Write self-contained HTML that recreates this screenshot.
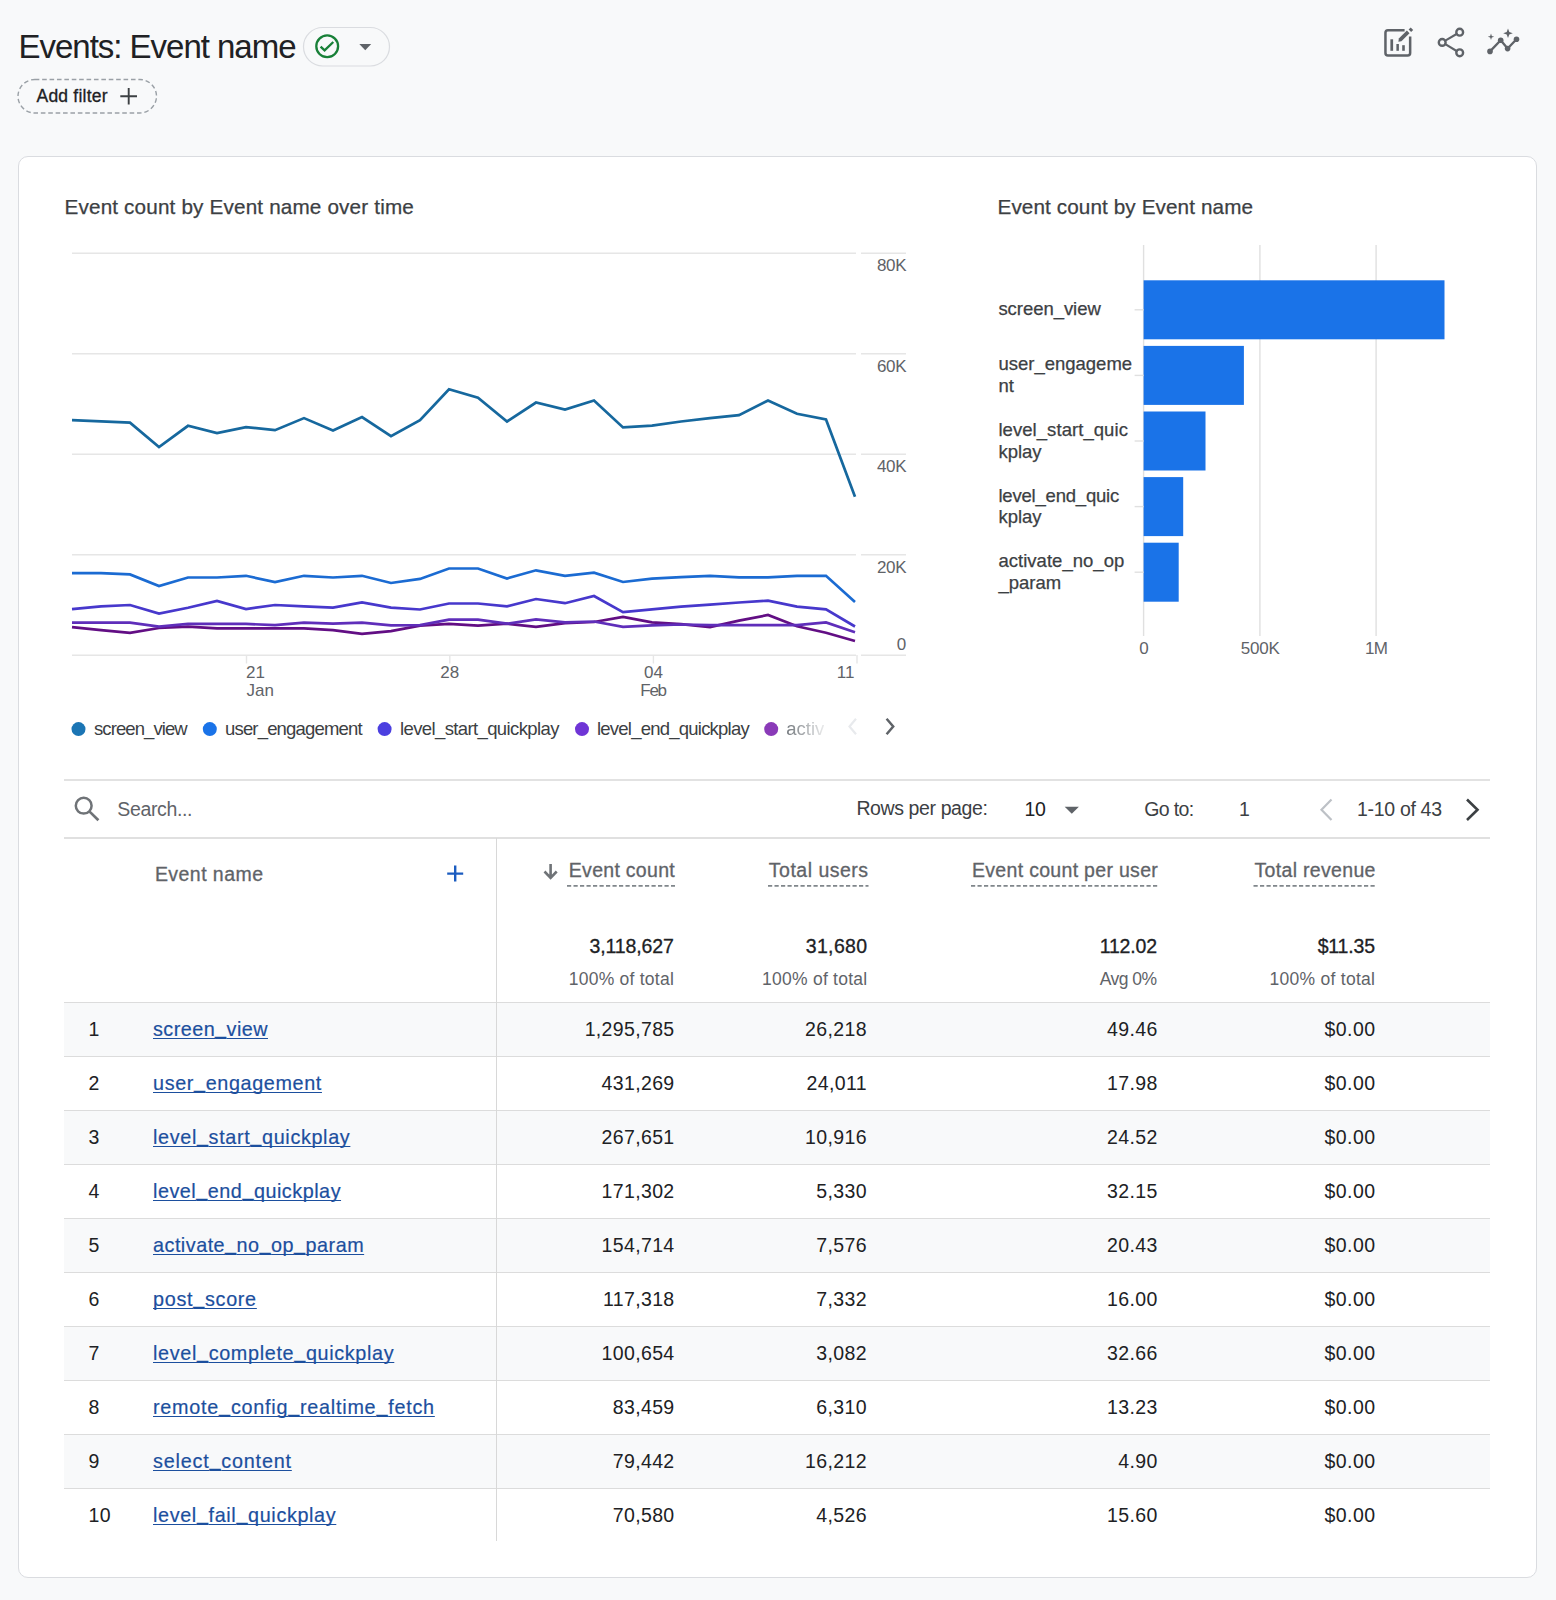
<!DOCTYPE html>
<html><head><meta charset="utf-8"><title>Events: Event name</title><style>
html,body{margin:0;padding:0;}
body{width:1556px;height:1600px;background:#f8f9fa;position:relative;overflow:hidden;font-family:"Liberation Sans", sans-serif;}
.t{position:absolute;white-space:nowrap;}
.st{-webkit-text-stroke:0.25px currentColor;}
.lk{text-decoration:underline;text-decoration-thickness:1.3px;text-underline-offset:2.2px;text-decoration-skip-ink:none;-webkit-text-stroke:0.2px currentColor;}
.us{position:relative;top:-1.6px;}
.act{-webkit-mask-image:linear-gradient(to right,#000 0%,rgba(0,0,0,.15) 100%);mask-image:linear-gradient(to right,#000 0%,rgba(0,0,0,.15) 100%);}
.abs{position:absolute;}
.card{position:absolute;left:18px;top:156px;width:1517px;height:1420px;background:#fff;border:1px solid #dadce0;border-radius:10px;box-sizing:content-box;}
.hl{position:absolute;left:64px;width:1426px;height:1px;background:#dcdcdc;}
.rowbg{position:absolute;left:64px;width:1426px;background:#f8f9fa;}
</style></head>
<body>
<div class="card"></div>
<div class="hl" style="top:779px;background:#e2e2e2;height:2px"></div><div class="hl" style="top:837px;height:2px;background:#e0e0e0"></div><div class="hl" style="top:1002.2px;"></div><div class="rowbg" style="top:1003.2px;height:53.5px"></div><div class="hl" style="top:1056.2px;"></div><div class="rowbg" style="top:1111.2px;height:53.5px"></div><div class="hl" style="top:1110.2px;"></div><div class="hl" style="top:1164.2px;"></div><div class="rowbg" style="top:1219.2px;height:53.5px"></div><div class="hl" style="top:1218.2px;"></div><div class="hl" style="top:1272.2px;"></div><div class="rowbg" style="top:1327.2px;height:53.5px"></div><div class="hl" style="top:1326.2px;"></div><div class="hl" style="top:1380.2px;"></div><div class="rowbg" style="top:1435.2px;height:53.5px"></div><div class="hl" style="top:1434.2px;"></div><div class="hl" style="top:1488.2px;"></div><div style="position:absolute;left:496px;top:838px;width:1px;height:703px;background:#d8d8d8"></div>
<svg class="abs" style="left:0;top:0" width="1556" height="1600" viewBox="0 0 1556 1600">
<line x1="72" y1="253.2" x2="856" y2="253.2" stroke="#e6e6e6" stroke-width="1.6"/><line x1="861" y1="253.2" x2="906" y2="253.2" stroke="#e6e6e6" stroke-width="1.6"/><line x1="72" y1="353.7" x2="856" y2="353.7" stroke="#e6e6e6" stroke-width="1.6"/><line x1="861" y1="353.7" x2="906" y2="353.7" stroke="#e6e6e6" stroke-width="1.6"/><line x1="72" y1="454.2" x2="856" y2="454.2" stroke="#e6e6e6" stroke-width="1.6"/><line x1="861" y1="454.2" x2="906" y2="454.2" stroke="#e6e6e6" stroke-width="1.6"/><line x1="72" y1="554.7" x2="856" y2="554.7" stroke="#e6e6e6" stroke-width="1.6"/><line x1="861" y1="554.7" x2="906" y2="554.7" stroke="#e6e6e6" stroke-width="1.6"/><line x1="72" y1="655.2" x2="856" y2="655.2" stroke="#e6e6e6" stroke-width="1.6"/><line x1="861" y1="655.2" x2="906" y2="655.2" stroke="#e6e6e6" stroke-width="1.6"/><line x1="246.5" y1="655" x2="246.5" y2="663.5" stroke="#e6e6e6" stroke-width="1.4"/><line x1="449.8" y1="655" x2="449.8" y2="663.5" stroke="#e6e6e6" stroke-width="1.4"/><line x1="653.4" y1="655" x2="653.4" y2="663.5" stroke="#e6e6e6" stroke-width="1.4"/><line x1="857" y1="655" x2="857" y2="663.5" stroke="#e6e6e6" stroke-width="1.4"/><polyline points="72.0,627.1 101.0,630.2 130.0,632.9 159.0,628.0 188.0,626.6 217.0,628.4 246.0,628.4 275.0,628.4 304.0,628.4 333.0,630.2 362.0,633.8 391.0,631.2 420.0,625.6 449.0,623.8 478.0,625.6 507.0,623.7 536.0,626.8 565.0,623.2 594.0,622.0 623.0,616.8 652.0,622.3 681.0,624.1 710.0,627.1 739.0,620.6 768.0,615.0 797.0,626.2 826.0,632.7 855.0,641.0" fill="none" stroke="#620e84" stroke-width="2.7" stroke-linejoin="miter" stroke-miterlimit="3"/><polyline points="72.0,622.6 101.0,622.6 130.0,622.6 159.0,626.6 188.0,623.9 217.0,623.9 246.0,623.9 275.0,625.1 304.0,622.6 333.0,623.6 362.0,622.6 391.0,625.3 420.0,625.1 449.0,619.6 478.0,619.6 507.0,623.7 536.0,619.3 565.0,622.4 594.0,621.5 623.0,626.9 652.0,625.3 681.0,624.5 710.0,625.2 739.0,625.2 768.0,625.2 797.0,625.2 826.0,622.4 855.0,632.3" fill="none" stroke="#5f2eba" stroke-width="2.7" stroke-linejoin="miter" stroke-miterlimit="3"/><polyline points="72.0,609.1 101.0,606.4 130.0,605.0 159.0,613.6 188.0,607.7 217.0,600.9 246.0,609.1 275.0,605.0 304.0,606.4 333.0,607.7 362.0,602.3 391.0,607.7 420.0,609.5 449.0,603.5 478.0,603.5 507.0,606.4 536.0,599.0 565.0,603.2 594.0,596.0 623.0,612.2 652.0,609.4 681.0,606.6 710.0,604.7 739.0,602.5 768.0,600.6 797.0,606.6 826.0,609.4 855.0,626.5" fill="none" stroke="#4738cc" stroke-width="2.7" stroke-linejoin="miter" stroke-miterlimit="3"/><polyline points="72.0,573.1 101.0,573.1 130.0,574.4 159.0,586.1 188.0,577.5 217.0,577.5 246.0,575.8 275.0,582.0 304.0,575.8 333.0,577.5 362.0,575.8 391.0,583.0 420.0,578.9 449.0,568.5 478.0,568.5 507.0,578.5 536.0,570.3 565.0,575.8 594.0,572.7 623.0,582.0 652.0,578.6 681.0,577.1 710.0,575.8 739.0,577.3 768.0,577.3 797.0,575.8 826.0,575.8 855.0,601.9" fill="none" stroke="#1b6bd2" stroke-width="2.7" stroke-linejoin="miter" stroke-miterlimit="3"/><polyline points="72.0,420.1 101.0,421.4 130.0,422.7 159.0,447.1 188.0,425.8 217.0,433.0 246.0,427.1 275.0,430.2 304.0,418.1 333.0,430.4 362.0,417.0 391.0,436.1 420.0,420.1 449.0,389.3 478.0,397.7 507.0,421.5 536.0,402.5 565.0,409.6 594.0,400.5 623.0,427.4 652.0,425.7 681.0,421.5 710.0,418.1 739.0,415.2 768.0,400.5 797.0,413.8 826.0,419.5 855.0,496.7" fill="none" stroke="#16689e" stroke-width="2.7" stroke-linejoin="miter" stroke-miterlimit="3"/><circle cx="78.5" cy="729.1" r="7" fill="#1b75b4"/><circle cx="209.8" cy="729.1" r="7" fill="#1a73e8"/><circle cx="384.6" cy="729.1" r="7" fill="#4b3fe0"/><circle cx="582" cy="729.1" r="7" fill="#6f35d6"/><circle cx="771.2" cy="729.1" r="7" fill="#8a3ab8"/><polyline points="856,718.8 849.5,726.5 856,734.2" fill="none" stroke="#e8eaed" stroke-width="2.2"/><polyline points="886.6,718.8 893.2,726.5 886.6,734.2" fill="none" stroke="#5f6368" stroke-width="2.5"/>
<line x1="1143.6" y1="245" x2="1143.6" y2="636" stroke="#e0e0e0" stroke-width="1.4"/><line x1="1259.9" y1="245" x2="1259.9" y2="636" stroke="#e0e0e0" stroke-width="1.4"/><line x1="1376.1" y1="245" x2="1376.1" y2="636" stroke="#e0e0e0" stroke-width="1.4"/><rect x="1143.6" y="280.3" width="300.9" height="59" fill="#1a73e8"/><line x1="1134.6" y1="309.8" x2="1143.6" y2="309.8" stroke="#e0e0e0" stroke-width="1.4"/><rect x="1143.6" y="345.9" width="100.3" height="59" fill="#1a73e8"/><line x1="1134.6" y1="375.4" x2="1143.6" y2="375.4" stroke="#e0e0e0" stroke-width="1.4"/><rect x="1143.6" y="411.5" width="61.9" height="59" fill="#1a73e8"/><line x1="1134.6" y1="441.0" x2="1143.6" y2="441.0" stroke="#e0e0e0" stroke-width="1.4"/><rect x="1143.6" y="477.1" width="39.6" height="59" fill="#1a73e8"/><line x1="1134.6" y1="506.6" x2="1143.6" y2="506.6" stroke="#e0e0e0" stroke-width="1.4"/><rect x="1143.6" y="542.7" width="35.1" height="59" fill="#1a73e8"/><line x1="1134.6" y1="572.2" x2="1143.6" y2="572.2" stroke="#e0e0e0" stroke-width="1.4"/>
</svg>

<svg class="abs" style="left:0;top:0" width="1556" height="200" viewBox="0 0 1556 200">
 <rect x="303.5" y="27.5" width="86" height="38.5" rx="19.25" fill="none" stroke="#dadce0" stroke-width="1.2"/>
 <circle cx="327.2" cy="46.3" r="10.9" fill="none" stroke="#188038" stroke-width="2.3"/>
 <polyline points="320.6,46.6 324.6,50.4 333.3,42" fill="none" stroke="#188038" stroke-width="2.3"/>
 <polygon points="359.3,44 371.2,44 365.25,50.2" fill="#5f6368"/>
 <rect x="18" y="79.5" width="138.5" height="33.5" rx="16.75" fill="none" stroke="#9aa0a6" stroke-width="1.4" stroke-dasharray="4.6 2.8"/>
 <path d="M120.3 96.2H137M128.7 87.9V104.6" stroke="#3c4043" stroke-width="1.9"/>
 <!-- customize icon -->
 <path d="M1404.6 30.15H1388a2.55 2.55 0 0 0-2.55 2.55V53a2.55 2.55 0 0 0 2.55 2.55H1407.6a2.55 2.55 0 0 0 2.55-2.55V36.4" fill="none" stroke="#5f6368" stroke-width="2.5"/>
 <g fill="#5f6368"><rect x="1390.4" y="39.3" width="2.7" height="11.5"/><rect x="1396.4" y="44" width="2.5" height="6.8"/><rect x="1402.2" y="45.2" width="2.6" height="5.6"/>
 <polygon points="1398.4,41.7 1398.8,38.6 1406.9,30.5 1409.5,33.2 1401.4,41.3"/>
 <polygon points="1413.2,29.9 1410.7,27.4 1408.6,29.6 1411.1,32.1"/></g>
 <!-- share -->
 <g fill="none" stroke="#5f6368" stroke-width="2.4">
  <circle cx="1459.7" cy="32.2" r="3.4"/><circle cx="1442.2" cy="42.4" r="3.4"/><circle cx="1459.7" cy="52.8" r="3.4"/>
  <path d="M1445.3 40.6L1456.6 34M1445.3 44.2L1456.6 51" stroke-width="2.1"/>
 </g>
 <!-- insights -->
 <polyline points="1490,51.4 1500.7,40.3 1507.6,48.6 1516.5,39.3" fill="none" stroke="#5f6368" stroke-width="2.3"/>
 <g fill="#5f6368"><circle cx="1490" cy="51.4" r="2.8"/><circle cx="1500.7" cy="40.3" r="2.8"/><circle cx="1507.6" cy="48.6" r="2.8"/><circle cx="1516.5" cy="39.3" r="2.8"/>
 <path d="M1508 28.5L1509.3 32L1512.8 33.3L1509.3 34.6L1508 38.1L1506.7 34.6L1503.2 33.3L1506.7 32Z"/>
 <path d="M1491 33.6L1491.8 36L1494.2 36.8L1491.8 37.6L1491 40L1490.2 37.6L1487.8 36.8L1490.2 36Z"/></g>
</svg>
<svg class="abs" style="left:0;top:0" width="1556" height="1600" viewBox="0 0 1556 1600">
 <circle cx="83.7" cy="805.7" r="7.9" fill="none" stroke="#6f7377" stroke-width="2.5"/>
 <path d="M89.6 811.6L98.4 820.3" stroke="#6f7377" stroke-width="2.7"/>
 <polygon points="1064.7,806.8 1078.9,806.8 1071.8,813.8" fill="#5f6368"/>
 <polyline points="1331.5,799.5 1321.5,809.8 1331.5,820" fill="none" stroke="#bdc1c6" stroke-width="2.2"/>
 <polyline points="1467,799.5 1477.5,809.8 1467,820" fill="none" stroke="#3c4043" stroke-width="2.6"/>
 <path d="M455.2 865.6V881.6M447.2 873.6H463.2" stroke="#1b5cc0" stroke-width="2.4"/>
 <path d="M550.6 864V877.5M544.5 871.5L550.6 877.8L556.7 871.5" fill="none" stroke="#6f7377" stroke-width="2.6"/>
 <line x1="567" y1="885.8" x2="675" y2="885.8" stroke="#80868b" stroke-width="1.7" stroke-dasharray="4.2 2.3"/>
<line x1="768" y1="885.8" x2="868.5" y2="885.8" stroke="#80868b" stroke-width="1.7" stroke-dasharray="4.2 2.3"/>
<line x1="971" y1="885.8" x2="1158" y2="885.8" stroke="#80868b" stroke-width="1.7" stroke-dasharray="4.2 2.3"/>
<line x1="1253.5" y1="885.8" x2="1376" y2="885.8" stroke="#80868b" stroke-width="1.7" stroke-dasharray="4.2 2.3"/>
</svg>
<div class="t" style="top:29.86px;font-size:33px;line-height:33px;color:#202124;letter-spacing:-1.019px;left:18.50px;-webkit-text-stroke:0.05px currentColor;">Events: Event name</div><div class="t" style="top:87.58px;font-size:17.5px;line-height:17.5px;color:#202124;-webkit-text-stroke:0.3px currentColor;letter-spacing:0.216px;left:36.50px;">Add filter</div><div class="t st" style="top:196.77px;font-size:20.7px;line-height:20.7px;color:#3c4043;letter-spacing:0.161px;left:64.50px;">Event count by Event name over time</div><div class="t st" style="top:196.67px;font-size:20.7px;line-height:20.7px;color:#3c4043;letter-spacing:0.104px;left:997.50px;">Event count by Event name</div><div class="t" style="top:256.81px;font-size:17px;line-height:17px;color:#5f6368;letter-spacing:-0.324px;left:876.90px;">80K</div><div class="t" style="top:357.51px;font-size:17px;line-height:17px;color:#5f6368;letter-spacing:-0.324px;left:876.90px;">60K</div><div class="t" style="top:458.11px;font-size:17px;line-height:17px;color:#5f6368;letter-spacing:-0.324px;left:876.90px;">40K</div><div class="t" style="top:558.81px;font-size:17px;line-height:17px;color:#5f6368;letter-spacing:-0.324px;left:876.90px;">20K</div><div class="t" style="top:636.01px;font-size:17px;line-height:17px;color:#5f6368;left:896.85px;">0</div><div class="t" style="top:664.41px;font-size:17px;line-height:17px;color:#5f6368;left:246.00px;">21</div><div class="t" style="top:682.11px;font-size:17px;line-height:17px;color:#5f6368;letter-spacing:0.045px;left:246.50px;">Jan</div><div class="t" style="top:664.41px;font-size:17px;line-height:17px;color:#5f6368;left:440.35px;">28</div><div class="t" style="top:664.41px;font-size:17px;line-height:17px;color:#5f6368;left:644.05px;">04</div><div class="t" style="top:682.11px;font-size:17px;line-height:17px;color:#5f6368;letter-spacing:-1.297px;left:640.35px;">Feb</div><div class="t" style="top:664.41px;font-size:17px;line-height:17px;color:#5f6368;left:836.85px;">11</div><div class="t" style="top:720.24px;font-size:18.5px;line-height:18.5px;color:#3c4043;letter-spacing:-0.912px;left:94.00px;">screen_view</div><div class="t" style="top:720.24px;font-size:18.5px;line-height:18.5px;color:#3c4043;letter-spacing:-0.824px;left:225.00px;">user_engagement</div><div class="t" style="top:720.24px;font-size:18.5px;line-height:18.5px;color:#3c4043;letter-spacing:-0.617px;left:400.00px;">level_start_quickplay</div><div class="t" style="top:720.24px;font-size:18.5px;line-height:18.5px;color:#3c4043;letter-spacing:-0.773px;left:597.00px;">level_end_quickplay</div><div class="t act" style="top:720.24px;font-size:18.5px;line-height:18.5px;color:#70757a;left:786.30px;">activ</div><div class="t st" style="top:300.24px;font-size:18.5px;line-height:18.5px;color:#3c4043;letter-spacing:-0.042px;left:998.40px;">screen_view</div><div class="t st" style="top:355.34px;font-size:18.5px;line-height:18.5px;color:#3c4043;left:998.40px;">user_engageme</div><div class="t st" style="top:376.74px;font-size:18.5px;line-height:18.5px;color:#3c4043;left:998.40px;">nt</div><div class="t st" style="top:421.24px;font-size:18.5px;line-height:18.5px;color:#3c4043;letter-spacing:0.064px;left:998.40px;">level_start_quic</div><div class="t st" style="top:442.54px;font-size:18.5px;line-height:18.5px;color:#3c4043;left:998.40px;">kplay</div><div class="t st" style="top:486.84px;font-size:18.5px;line-height:18.5px;color:#3c4043;letter-spacing:-0.195px;left:998.40px;">level_end_quic</div><div class="t st" style="top:508.14px;font-size:18.5px;line-height:18.5px;color:#3c4043;left:998.40px;">kplay</div><div class="t st" style="top:552.44px;font-size:18.5px;line-height:18.5px;color:#3c4043;letter-spacing:0.032px;left:998.40px;">activate_no_op</div><div class="t st" style="top:573.74px;font-size:18.5px;line-height:18.5px;color:#3c4043;left:998.40px;">_param</div><div class="t" style="top:640.21px;font-size:17px;line-height:17px;color:#5f6368;left:1139.17px;">0</div><div class="t" style="top:640.21px;font-size:17px;line-height:17px;color:#5f6368;letter-spacing:-0.268px;left:1240.85px;">500K</div><div class="t" style="top:640.21px;font-size:17px;line-height:17px;color:#5f6368;letter-spacing:-0.816px;left:1365.00px;">1M</div><div class="t" style="top:799.79px;font-size:19.5px;line-height:19.5px;color:#5f6368;letter-spacing:-0.355px;left:117.30px;">Search...</div><div class="t" style="top:799.49px;font-size:19.5px;line-height:19.5px;color:#3c4043;letter-spacing:-0.390px;left:856.40px;">Rows per page:</div><div class="t" style="top:799.69px;font-size:19.5px;line-height:19.5px;color:#202124;letter-spacing:-0.490px;left:1024.60px;">10</div><div class="t" style="top:799.69px;font-size:19.5px;line-height:19.5px;color:#3c4043;letter-spacing:-0.642px;left:1144.30px;">Go to:</div><div class="t" style="top:799.69px;font-size:19.5px;line-height:19.5px;color:#3c4043;left:1238.90px;">1</div><div class="t" style="top:799.69px;font-size:19.5px;line-height:19.5px;color:#3c4043;letter-spacing:-0.313px;left:1357.00px;">1-10 of 43</div><div class="t" style="top:864.89px;font-size:19.5px;line-height:19.5px;color:#5f6368;-webkit-text-stroke:0.3px currentColor;letter-spacing:0.449px;left:154.90px;">Event name</div><div class="t" style="top:860.59px;font-size:19.5px;line-height:19.5px;color:#5f6368;-webkit-text-stroke:0.3px currentColor;letter-spacing:0.292px;left:568.80px;">Event count</div><div class="t" style="top:860.59px;font-size:19.5px;line-height:19.5px;color:#5f6368;-webkit-text-stroke:0.3px currentColor;letter-spacing:0.501px;left:768.80px;">Total users</div><div class="t" style="top:860.59px;font-size:19.5px;line-height:19.5px;color:#5f6368;-webkit-text-stroke:0.3px currentColor;letter-spacing:0.309px;left:972.00px;">Event count per user</div><div class="t" style="top:860.59px;font-size:19.5px;line-height:19.5px;color:#5f6368;-webkit-text-stroke:0.3px currentColor;letter-spacing:0.319px;left:1254.50px;">Total revenue</div><div class="t" style="top:936.99px;font-size:19.5px;line-height:19.5px;color:#202124;-webkit-text-stroke:0.3px currentColor;letter-spacing:-0.138px;left:589.60px;">3,118,627</div><div class="t" style="top:970.78px;font-size:17.5px;line-height:17.5px;color:#5f6368;letter-spacing:0.237px;left:568.80px;">100% of total</div><div class="t" style="top:936.99px;font-size:19.5px;line-height:19.5px;color:#202124;-webkit-text-stroke:0.3px currentColor;letter-spacing:0.371px;left:805.70px;">31,680</div><div class="t" style="top:970.78px;font-size:17.5px;line-height:17.5px;color:#5f6368;letter-spacing:0.254px;left:762.00px;">100% of total</div><div class="t" style="top:936.99px;font-size:19.5px;line-height:19.5px;color:#202124;-webkit-text-stroke:0.3px currentColor;letter-spacing:-0.179px;left:1099.70px;">112.02</div><div class="t" style="top:970.78px;font-size:17.5px;line-height:17.5px;color:#5f6368;letter-spacing:-0.539px;left:1099.70px;">Avg 0%</div><div class="t" style="top:936.99px;font-size:19.5px;line-height:19.5px;color:#202124;-webkit-text-stroke:0.3px currentColor;letter-spacing:-0.179px;left:1317.70px;">$11.35</div><div class="t" style="top:970.78px;font-size:17.5px;line-height:17.5px;color:#5f6368;letter-spacing:0.287px;left:1269.40px;">100% of total</div><div class="t" style="top:1020.19px;font-size:19.5px;line-height:19.5px;color:#202124;letter-spacing:0.300px;left:88.50px;">1</div><div class="t lk" style="top:1019.94px;font-size:19.8px;line-height:19.8px;color:#1c4f9e;letter-spacing:0.455px;left:153.00px;">screen<span class="us">_</span>view</div><div class="t" style="top:1020.19px;font-size:19.5px;line-height:19.5px;color:#202124;letter-spacing:0.350px;left:584.65px;">1,295,785</div><div class="t" style="top:1020.19px;font-size:19.5px;line-height:19.5px;color:#202124;letter-spacing:0.350px;left:805.11px;">26,218</div><div class="t" style="top:1020.19px;font-size:19.5px;line-height:19.5px;color:#202124;letter-spacing:0.350px;left:1107.10px;">49.46</div><div class="t" style="top:1020.19px;font-size:19.5px;line-height:19.5px;color:#202124;letter-spacing:0.426px;left:1324.50px;">$0.00</div><div class="t" style="top:1074.19px;font-size:19.5px;line-height:19.5px;color:#202124;letter-spacing:0.300px;left:88.50px;">2</div><div class="t lk" style="top:1073.94px;font-size:19.8px;line-height:19.8px;color:#1c4f9e;letter-spacing:0.631px;left:153.00px;">user<span class="us">_</span>engagement</div><div class="t" style="top:1074.19px;font-size:19.5px;line-height:19.5px;color:#202124;letter-spacing:0.350px;left:601.61px;">431,269</div><div class="t" style="top:1074.19px;font-size:19.5px;line-height:19.5px;color:#202124;letter-spacing:0.350px;left:806.55px;">24,011</div><div class="t" style="top:1074.19px;font-size:19.5px;line-height:19.5px;color:#202124;letter-spacing:0.350px;left:1107.10px;">17.98</div><div class="t" style="top:1074.19px;font-size:19.5px;line-height:19.5px;color:#202124;letter-spacing:0.426px;left:1324.50px;">$0.00</div><div class="t" style="top:1128.19px;font-size:19.5px;line-height:19.5px;color:#202124;letter-spacing:0.300px;left:88.50px;">3</div><div class="t lk" style="top:1127.94px;font-size:19.8px;line-height:19.8px;color:#1c4f9e;letter-spacing:0.654px;left:153.00px;">level<span class="us">_</span>start<span class="us">_</span>quickplay</div><div class="t" style="top:1128.19px;font-size:19.5px;line-height:19.5px;color:#202124;letter-spacing:0.350px;left:601.61px;">267,651</div><div class="t" style="top:1128.19px;font-size:19.5px;line-height:19.5px;color:#202124;letter-spacing:0.350px;left:805.11px;">10,916</div><div class="t" style="top:1128.19px;font-size:19.5px;line-height:19.5px;color:#202124;letter-spacing:0.350px;left:1107.10px;">24.52</div><div class="t" style="top:1128.19px;font-size:19.5px;line-height:19.5px;color:#202124;letter-spacing:0.426px;left:1324.50px;">$0.00</div><div class="t" style="top:1182.19px;font-size:19.5px;line-height:19.5px;color:#202124;letter-spacing:0.300px;left:88.50px;">4</div><div class="t lk" style="top:1181.94px;font-size:19.8px;line-height:19.8px;color:#1c4f9e;letter-spacing:0.519px;left:153.00px;">level<span class="us">_</span>end<span class="us">_</span>quickplay</div><div class="t" style="top:1182.19px;font-size:19.5px;line-height:19.5px;color:#202124;letter-spacing:0.350px;left:601.61px;">171,302</div><div class="t" style="top:1182.19px;font-size:19.5px;line-height:19.5px;color:#202124;letter-spacing:0.350px;left:816.30px;">5,330</div><div class="t" style="top:1182.19px;font-size:19.5px;line-height:19.5px;color:#202124;letter-spacing:0.350px;left:1107.10px;">32.15</div><div class="t" style="top:1182.19px;font-size:19.5px;line-height:19.5px;color:#202124;letter-spacing:0.426px;left:1324.50px;">$0.00</div><div class="t" style="top:1236.19px;font-size:19.5px;line-height:19.5px;color:#202124;letter-spacing:0.300px;left:88.50px;">5</div><div class="t lk" style="top:1235.94px;font-size:19.8px;line-height:19.8px;color:#1c4f9e;letter-spacing:0.492px;left:153.00px;">activate<span class="us">_</span>no<span class="us">_</span>op<span class="us">_</span>param</div><div class="t" style="top:1236.19px;font-size:19.5px;line-height:19.5px;color:#202124;letter-spacing:0.350px;left:601.61px;">154,714</div><div class="t" style="top:1236.19px;font-size:19.5px;line-height:19.5px;color:#202124;letter-spacing:0.350px;left:816.30px;">7,576</div><div class="t" style="top:1236.19px;font-size:19.5px;line-height:19.5px;color:#202124;letter-spacing:0.350px;left:1107.10px;">20.43</div><div class="t" style="top:1236.19px;font-size:19.5px;line-height:19.5px;color:#202124;letter-spacing:0.426px;left:1324.50px;">$0.00</div><div class="t" style="top:1290.19px;font-size:19.5px;line-height:19.5px;color:#202124;letter-spacing:0.300px;left:88.50px;">6</div><div class="t lk" style="top:1289.94px;font-size:19.8px;line-height:19.8px;color:#1c4f9e;letter-spacing:0.704px;left:153.00px;">post<span class="us">_</span>score</div><div class="t" style="top:1290.19px;font-size:19.5px;line-height:19.5px;color:#202124;letter-spacing:0.350px;left:603.06px;">117,318</div><div class="t" style="top:1290.19px;font-size:19.5px;line-height:19.5px;color:#202124;letter-spacing:0.350px;left:816.30px;">7,332</div><div class="t" style="top:1290.19px;font-size:19.5px;line-height:19.5px;color:#202124;letter-spacing:0.350px;left:1107.10px;">16.00</div><div class="t" style="top:1290.19px;font-size:19.5px;line-height:19.5px;color:#202124;letter-spacing:0.426px;left:1324.50px;">$0.00</div><div class="t" style="top:1344.19px;font-size:19.5px;line-height:19.5px;color:#202124;letter-spacing:0.300px;left:88.50px;">7</div><div class="t lk" style="top:1343.94px;font-size:19.8px;line-height:19.8px;color:#1c4f9e;letter-spacing:0.660px;left:153.00px;">level<span class="us">_</span>complete<span class="us">_</span>quickplay</div><div class="t" style="top:1344.19px;font-size:19.5px;line-height:19.5px;color:#202124;letter-spacing:0.350px;left:601.61px;">100,654</div><div class="t" style="top:1344.19px;font-size:19.5px;line-height:19.5px;color:#202124;letter-spacing:0.350px;left:816.30px;">3,082</div><div class="t" style="top:1344.19px;font-size:19.5px;line-height:19.5px;color:#202124;letter-spacing:0.350px;left:1107.10px;">32.66</div><div class="t" style="top:1344.19px;font-size:19.5px;line-height:19.5px;color:#202124;letter-spacing:0.426px;left:1324.50px;">$0.00</div><div class="t" style="top:1398.19px;font-size:19.5px;line-height:19.5px;color:#202124;letter-spacing:0.300px;left:88.50px;">8</div><div class="t lk" style="top:1397.94px;font-size:19.8px;line-height:19.8px;color:#1c4f9e;letter-spacing:0.756px;left:153.00px;">remote<span class="us">_</span>config<span class="us">_</span>realtime<span class="us">_</span>fetch</div><div class="t" style="top:1398.19px;font-size:19.5px;line-height:19.5px;color:#202124;letter-spacing:0.350px;left:612.81px;">83,459</div><div class="t" style="top:1398.19px;font-size:19.5px;line-height:19.5px;color:#202124;letter-spacing:0.350px;left:816.30px;">6,310</div><div class="t" style="top:1398.19px;font-size:19.5px;line-height:19.5px;color:#202124;letter-spacing:0.350px;left:1107.10px;">13.23</div><div class="t" style="top:1398.19px;font-size:19.5px;line-height:19.5px;color:#202124;letter-spacing:0.426px;left:1324.50px;">$0.00</div><div class="t" style="top:1452.19px;font-size:19.5px;line-height:19.5px;color:#202124;letter-spacing:0.300px;left:88.50px;">9</div><div class="t lk" style="top:1451.94px;font-size:19.8px;line-height:19.8px;color:#1c4f9e;letter-spacing:0.803px;left:153.00px;">select<span class="us">_</span>content</div><div class="t" style="top:1452.19px;font-size:19.5px;line-height:19.5px;color:#202124;letter-spacing:0.350px;left:612.81px;">79,442</div><div class="t" style="top:1452.19px;font-size:19.5px;line-height:19.5px;color:#202124;letter-spacing:0.350px;left:805.11px;">16,212</div><div class="t" style="top:1452.19px;font-size:19.5px;line-height:19.5px;color:#202124;letter-spacing:0.350px;left:1118.30px;">4.90</div><div class="t" style="top:1452.19px;font-size:19.5px;line-height:19.5px;color:#202124;letter-spacing:0.426px;left:1324.50px;">$0.00</div><div class="t" style="top:1506.19px;font-size:19.5px;line-height:19.5px;color:#202124;letter-spacing:0.300px;left:88.50px;">10</div><div class="t lk" style="top:1505.94px;font-size:19.8px;line-height:19.8px;color:#1c4f9e;letter-spacing:0.640px;left:153.00px;">level<span class="us">_</span>fail<span class="us">_</span>quickplay</div><div class="t" style="top:1506.19px;font-size:19.5px;line-height:19.5px;color:#202124;letter-spacing:0.350px;left:612.81px;">70,580</div><div class="t" style="top:1506.19px;font-size:19.5px;line-height:19.5px;color:#202124;letter-spacing:0.350px;left:816.30px;">4,526</div><div class="t" style="top:1506.19px;font-size:19.5px;line-height:19.5px;color:#202124;letter-spacing:0.350px;left:1107.10px;">15.60</div><div class="t" style="top:1506.19px;font-size:19.5px;line-height:19.5px;color:#202124;letter-spacing:0.426px;left:1324.50px;">$0.00</div>
</body></html>
